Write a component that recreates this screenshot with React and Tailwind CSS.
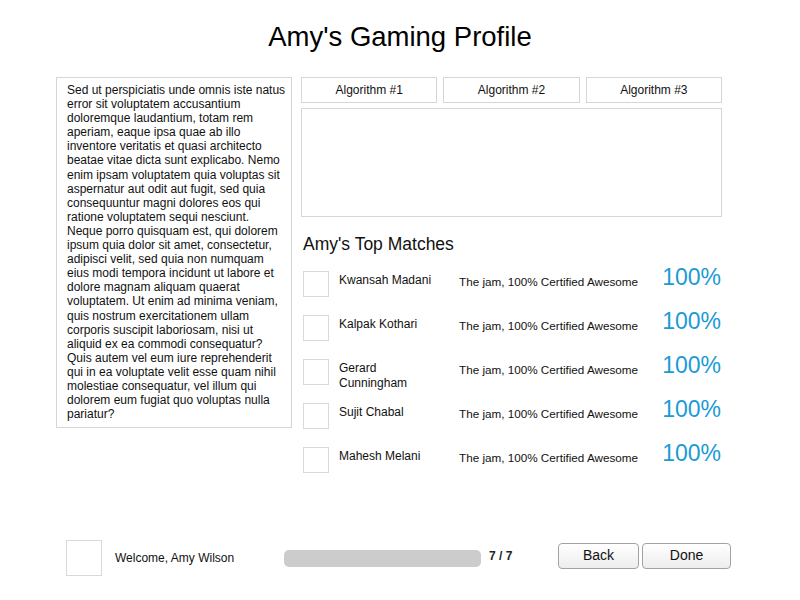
import React from "react";

const loremLines = [
  "Sed ut perspiciatis unde omnis iste natus",
  "error sit voluptatem accusantium",
  "doloremque laudantium, totam rem",
  "aperiam, eaque ipsa quae ab illo",
  "inventore veritatis et quasi architecto",
  "beatae vitae dicta sunt explicabo. Nemo",
  "enim ipsam voluptatem quia voluptas sit",
  "aspernatur aut odit aut fugit, sed quia",
  "consequuntur magni dolores eos qui",
  "ratione voluptatem sequi nesciunt.",
  "Neque porro quisquam est, qui dolorem",
  "ipsum quia dolor sit amet, consectetur,",
  "adipisci velit, sed quia non numquam",
  "eius modi tempora incidunt ut labore et",
  "dolore magnam aliquam quaerat",
  "voluptatem. Ut enim ad minima veniam,",
  "quis nostrum exercitationem ullam",
  "corporis suscipit laboriosam, nisi ut",
  "aliquid ex ea commodi consequatur?",
  "Quis autem vel eum iure reprehenderit",
  "qui in ea voluptate velit esse quam nihil",
  "molestiae consequatur, vel illum qui",
  "dolorem eum fugiat quo voluptas nulla",
  "pariatur?",
];

const matches = [
  "Kwansah Madani",
  "Kalpak Kothari",
  "Gerard Cunningham",
  "Sujit Chabal",
  "Mahesh Melani",
];

export default function App() {
  return (
    <div
      className="w-[800px] h-[600px] bg-white text-black flex flex-col"
      style={{ fontFamily: '"Liberation Sans", Arial, sans-serif' }}
    >
      <h1 className="pt-[22px] text-center text-[27.5px] leading-[30px]">
        Amy's Gaming Profile
      </h1>

      <div className="flex mt-[25px] pl-[56px]">
        <div className="w-[236px] self-start border border-[#d6d6d6] pl-[10px] pr-[3px] pt-[5px] pb-[6px] text-[12px] leading-[14.1px] text-[#111]">
          {loremLines.map((l, i) => (
            <div key={i} className="whitespace-nowrap">
              {l}
            </div>
          ))}
        </div>

        <div className="ml-[9px] w-[421px] flex flex-col">
          <div className="flex gap-[6px]">
            {["Algorithm #1", "Algorithm #2", "Algorithm #3"].map((a) => (
              <div
                key={a}
                className="flex-1 h-[26px] border border-[#d6d6d6] flex items-center justify-center text-[12px] text-[#111]"
              >
                {a}
              </div>
            ))}
          </div>
          <div className="mt-[5px] h-[109px] border border-[#d6d6d6]" />

          <h2 className="mt-[17px] ml-[2px] text-[17.5px] leading-[20px] text-[#111]">
            Amy's Top Matches
          </h2>

          <div className="mt-[17px] flex flex-col">
            {matches.map((m) => (
              <div key={m} className="flex items-start h-[44px] pl-[2px]">
                <div className="w-[26px] h-[26px] border border-[#d9d9d9] shrink-0" />
                <div className="ml-[10px] w-[104px] pt-[2px] text-[12px] leading-[15px] text-[#111]">
                  {m}
                </div>
                <div className="ml-[16px] pt-[3px] text-[11.7px] leading-[15px] text-[#111] whitespace-nowrap">
                  The jam, 100% Certified Awesome
                </div>
                <div className="ml-auto -mt-[7px] mr-[1px] text-[23px] leading-[26px] text-[#1a9ad6]">
                  100%
                </div>
              </div>
            ))}
          </div>
        </div>
      </div>

      <div className="flex-1" />

      <div className="flex items-center h-[35px] mb-[25px] pl-[66px]">
        <div className="w-[36px] h-[36px] border border-[#d9d9d9]" />
        <div className="ml-[13px] text-[12px] text-[#111] w-[169px]">
          Welcome, Amy Wilson
        </div>
        <div className="w-[197px] h-[17px] rounded-[5px] bg-[#cccccc] mt-[1px]" />
        <div className="ml-[8px] text-[12px] font-bold text-[#222] -mt-[3px] w-[69px]">
          7 / 7
        </div>
        <button className="w-[81px] h-[26px] -mt-[4px] rounded-[4px] border border-[#a3a3a3] bg-gradient-to-b from-white to-[#ededed] text-[14px] text-[#111] flex items-center justify-center">
          Back
        </button>
        <button className="ml-[3px] w-[89px] h-[26px] -mt-[4px] rounded-[4px] border border-[#a3a3a3] bg-gradient-to-b from-white to-[#ededed] text-[14px] text-[#111] flex items-center justify-center">
          Done
        </button>
      </div>
    </div>
  );
}
